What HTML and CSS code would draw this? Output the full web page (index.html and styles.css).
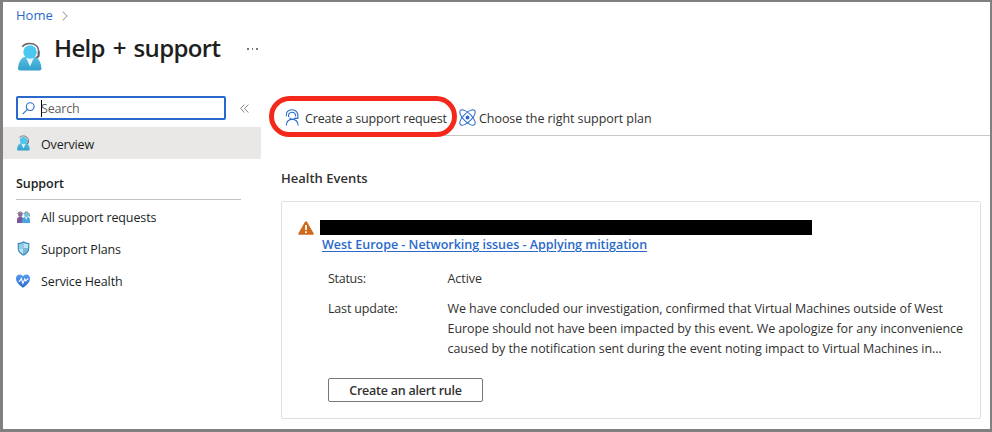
FILE: index.html
```
<!DOCTYPE html>
<html lang="en">
<head>
<meta charset="utf-8">
<title>Help + support</title>
<link rel="stylesheet" href="styles.css">
</head>
<body>
<svg class="defs" aria-hidden="true">
  <defs>
    <linearGradient id="coat" x1="0" y1="0" x2="0" y2="1"><stop offset="0" stop-color="#57bfe3"/><stop offset="1" stop-color="#319fcb"/></linearGradient>
    <linearGradient id="heart" x1="0" y1="0" x2="0" y2="1"><stop offset="0" stop-color="#5a9cf0"/><stop offset="1" stop-color="#2368cf"/></linearGradient>
    <symbol id="agent" viewBox="0 0 24 29">
      <path d="M4.200 4.700C7 .8 14.500.3 18.400 3.700C20.800 6 21.200 9 20.600 13.500" fill="none" stroke="#666" stroke-width="1.500"/>
      <path d="M20.600 9v5q-1 2-4 2" fill="none" stroke="#666" stroke-width="2"/>
      <path d="M0 26.500C.5 21 2.500 16.500 6 15h11.500c3.500 1.500 5.500 6 6 11.500q0 2-2 2h-19.500q-2 0-2-2z" fill="url(#coat)"/>
      <path d="M8 15.500h8l-4 9z" fill="#e9f6fc"/>
      <circle cx="12" cy="10" r="6.700" fill="#4ac8f0"/>
    </symbol>
  </defs>
</svg>
<div class="window">
  <header>
    <nav class="breadcrumb"><a href="#">Home</a>
      <svg width="6" height="10" viewBox="0 0 6 10"><path d="M.6.500 5.200 5 .6 9.500" fill="none" stroke="#8a8886"/></svg>
    </nav>
    <div class="title-row">
      <svg class="title-icon" width="24" height="29"><use href="#agent"/></svg>
      <h1>Help + support</h1>
      <span class="more"><i></i><i></i><i></i></span>
    </div>
  </header>
  <div class="columns">
    <aside>
      <div class="search-row">
        <div class="search">
          <svg width="13" height="13" viewBox="0 0 13 13" fill="none" stroke="#2a69cc" stroke-width="1.100"><circle cx="8.200" cy="4.600" r="3.900"/><path d="M5.400 7.400.6 12.200"/></svg>
          <span class="caret"></span><span class="placeholder">Search</span>
        </div>
        <svg class="collapse" width="9" height="9" viewBox="0 0 9 9" fill="none" stroke="#777" stroke-width=".9"><path d="M4.400.5.600 4.500l3.800 4M8.300.5 4.500 4.500l3.800 4"/></svg>
      </div>
      <a class="item selected" href="#"><svg width="13" height="16"><use href="#agent"/></svg><span>Overview</span></a>
      <h2>Support</h2>
      <a class="item" href="#">
        <svg width="13" height="13" viewBox="0 0 13 13">
          <path d="M0 12V8.500Q0 6 2.500 6H5l1.500 2v4z" fill="#7d5796"/>
          <path d="M5 12V9.500Q5.500 6 8 6h2.500Q13 6 13 9.500V12z" fill="#4aa3da"/>
          <path d="M8 6h2.500L9.200 9z" fill="#e8f5fc"/>
          <circle cx="3.300" cy="3.700" r="2.300" fill="#8a6a9f"/><circle cx="9.300" cy="3.900" r="2.200" fill="#65c3ed"/>
          <path d="M.6 3C1 .600 4.800.2 6 2.700M7 3.200c.6-3 5-3 5.200.8v1.500" fill="none" stroke="#666" stroke-width="1"/>
        </svg><span>All support requests</span></a>
      <a class="item plans" href="#">
        <svg width="13" height="15" viewBox="0 0 13 15">
          <path d="M6.500.3Q9 2 12.300 2v5.500q0 4.500-5.800 7.200Q.7 12 .7 7.500V2Q4 2 6.500.3z" fill="#3e8fbd"/>
          <path d="M6.500 1.700V7.500H1.900V3Q4.500 2.900 6.500 1.700z" fill="#91cbe7"/><path d="M6.500 1.700Q8.500 2.900 11.100 3v4.500H6.500z" fill="#c2e3f2"/>
          <path d="M1.900 7.500h4.600v5.700Q2 11 1.900 7.500z" fill="#c2e3f2"/><path d="M6.500 7.500h4.600q0 3.500-4.600 5.700z" fill="#78b9da"/>
        </svg><span>Support Plans</span></a>
      <a class="item health" href="#">
        <svg width="14" height="14" viewBox="0 0 14 14">
          <path d="M7 13.700C2.500 10.500 0 7.800 0 4.400 0 1.900 1.700.4 3.700.4 5.200.4 6.400 1.200 7 2.500 7.600 1.200 8.800.4 10.300.4c2 0 3.700 1.500 3.700 4 0 3.400-2.500 6.100-7 9.300z" fill="url(#heart)"/>
          <path d="M2.500 7.200h1.300L5.300 4.500l1.600 5L8.800 5l.8 1.800 2.700-2.300" fill="none" stroke="#fff" stroke-width="1.100"/>
        </svg><span>Service Health</span></a>
    </aside>
    <main>
      <div class="toolbar">
        <a class="command" href="#">
          <svg width="15" height="17" viewBox="0 0 15 17" fill="none" stroke="#2a69cc" stroke-width="1.100">
            <path d="M1.300 7.300C.6 3.200 3.300.700 7 .700c3.800 0 6.200 2.700 5.900 6.800v1.900H9.500"/>
            <path d="M3.600 8C3 5.200 4.600 3.300 7 3.300s3.900 1.800 3.600 4.200"/>
            <path d="M4.500 8.700c1.200 2.300 4.300 2.200 5.300.2"/>
            <path d="M1.200 16.500c.2-3.500 2.300-6.100 6-6.100s5.800 2.600 6 6.100"/>
          </svg><span>Create a support request</span></a>
        <a class="command plan" href="#">
          <svg width="17" height="17" viewBox="0 0 17 17" fill="none" stroke="#2a69cc" stroke-width="1">
            <ellipse cx="8.500" cy="8.500" rx="10" ry="4.200" transform="rotate(45 8.500 8.500)"/>
            <ellipse cx="8.500" cy="8.500" rx="10" ry="4.200" transform="rotate(-45 8.500 8.500)"/>
            <circle cx="8.500" cy="8.500" r="1.900" fill="#2a69cc" stroke="none"/>
          </svg><span>Choose the right support plan</span></a>
        <span class="highlight"></span>
      </div>
      <h3>Health Events</h3>
      <section class="card">
        <div class="event">
          <svg width="16" height="14" viewBox="0 0 16 14"><path d="M7 .8q1-1.300 2 0l6.600 11.500q.5 1.500-1 1.500H1.400q-1.500 0-1-1.500z" fill="#cf6a1c"/><path d="M8 4v5M8 10.300v1.800" stroke="#fff" stroke-width="1.800"/></svg>
          <div class="event-title"><div class="redacted"></div><a href="#">West Europe - Networking issues - Applying mitigation</a></div>
        </div>
        <dl>
          <dt>Status:</dt><dd>Active</dd>
          <dt class="update">Last update:</dt>
          <dd>We have concluded our investigation, confirmed that Virtual Machines outside of West<br>Europe should not have been impacted by this event. We apologize for any inconvenience<br>caused by the notification sent during the event noting impact to Virtual Machines in…</dd>
        </dl>
        <button type="button">Create an alert rule</button>
      </section>
    </main>
  </div>
</div>
</body>
</html>
```
FILE: styles.css
```
* { box-sizing: border-box; }
body {
  margin: 0;
  font-family: "Open Sans", "Noto Sans", sans-serif;
  font-size: 12.5px;
  line-height: 20px;
  letter-spacing: -0.075px;
  color: #323130;
}
a { color: inherit; text-decoration: none; }
svg { display: block; flex: none; }
h1, h2, h3, dl, dd { margin: 0; }
.defs { position: absolute; width: 0; height: 0; }
.window {
  width: 992px;
  height: 432px;
  border: solid #808080;
  border-width: 2px 2px 3px 3px;
  background: #fff;
  overflow: hidden;
  white-space: nowrap;
}
header { height: 94px; padding: 3px 0 0 13px; }
.breadcrumb { display: flex; align-items: center; gap: 9px; height: 20px; font-size: 13px; letter-spacing: 0; }
.breadcrumb a { color: #2a69cc; }
.breadcrumb svg { margin-top: 2px; }
.title-row { display: flex; height: 46px; }
.title-icon { margin: 17px 12px 0 2px; }
h1 { width: 193px; margin-top: 6px; font-size: 24px; line-height: 34px; font-weight: 600; letter-spacing: -0.65px; word-spacing: 2.200px; color: #201f1e; }
.more { display: flex; gap: 3px; padding-top: 23px; }
.more i { width: 1.500px; height: 1.500px; background: #777; }
.columns { display: flex; }
aside { width: 258px; color: #201f1e; }
.search-row { display: flex; align-items: center; height: 24px; margin-bottom: 7px; padding-left: 13px; }
.search {
  display: flex; align-items: center;
  width: 210px; height: 24px; padding-left: 4px;
  border: 2px solid #2a69cc; border-radius: 2px;
}
.caret { width: 1px; height: 17px; margin-left: 6px; background: #000; }
.placeholder { margin: 2px 0 0 -1px; color: #605e5c; letter-spacing: -0.2px; }
.collapse { margin-left: 14px; }
.item { display: flex; align-items: center; height: 32px; padding-left: 14px; letter-spacing: -0.11px; }
.item svg { margin-right: 11px; }
.item span { margin-top: 2px; }
.item.selected { background: #e9e8e6; letter-spacing: -0.15px; }
.item.selected svg { margin-top: 0; }
.item.selected span { margin-top: 4px; }
.item.plans svg { margin-top: -2px; }
.item.health svg { margin: -1px 11px 0 -1px; }
h2 {
  width: 225px; height: 41px; margin: 0 0 1px 13px; padding-top: 15px;
  font-size: 12.500px; line-height: 20px; font-weight: 600;
  border-bottom: 1px solid #c3c2c1;
}
main { flex: 1; padding-left: 20px; }
.toolbar {
  position: relative;
  display: flex; align-items: center;
  height: 40px; padding: 3px 0 0 4px;
  border-bottom: 1px solid #c8c6c4;
}
.command { display: flex; align-items: center; gap: 5px; width: 174px; letter-spacing: -0.17px; }
.command svg { margin-top: 1px; }
.command span { margin-top: 3px; }
.command.plan { gap: 3px; letter-spacing: -0.06px; }
.highlight {
  position: absolute; left: -12px; top: 0;
  width: 188px; height: 41px;
  border: 5px solid #f5291b; border-radius: 21px;
}
h3 { margin-top: 32px; font-size: 13px; line-height: 20px; font-weight: 600; letter-spacing: 0; }
.card {
  width: 700px; height: 218px; margin-top: 13px; padding: 18px 17px;
  border: 1px solid #e0dfde; border-radius: 2px;
}
.event { display: flex; gap: 6px; margin-left: -1px; }
.event > svg { margin-top: 1px; }
.redacted { width: 492px; height: 15px; background: #000; }
.event-title a {
  display: block; width: max-content; margin-left: 2px; line-height: 19px;
  font-weight: 600; letter-spacing: -0.01px; color: #2a69cc;
  text-decoration: underline; text-underline-offset: 2px; text-decoration-thickness: 1px;
}
dl { display: grid; grid-template-columns: 119.500px 1fr; row-gap: 10px; margin: 15px 0 0 29px; letter-spacing: -0.07px; }
dt { letter-spacing: -0.28px; }
dt.update { letter-spacing: -0.18px; }
button {
  display: block; width: 155px; height: 24px; margin: 19px 0 0 29px; padding: 2px 0 0;
  border: 1px solid #797775; border-radius: 2px; background: #fff;
  font: 600 12.500px/20px "Open Sans", sans-serif; letter-spacing: -0.23px; color: #323130;
}
```
